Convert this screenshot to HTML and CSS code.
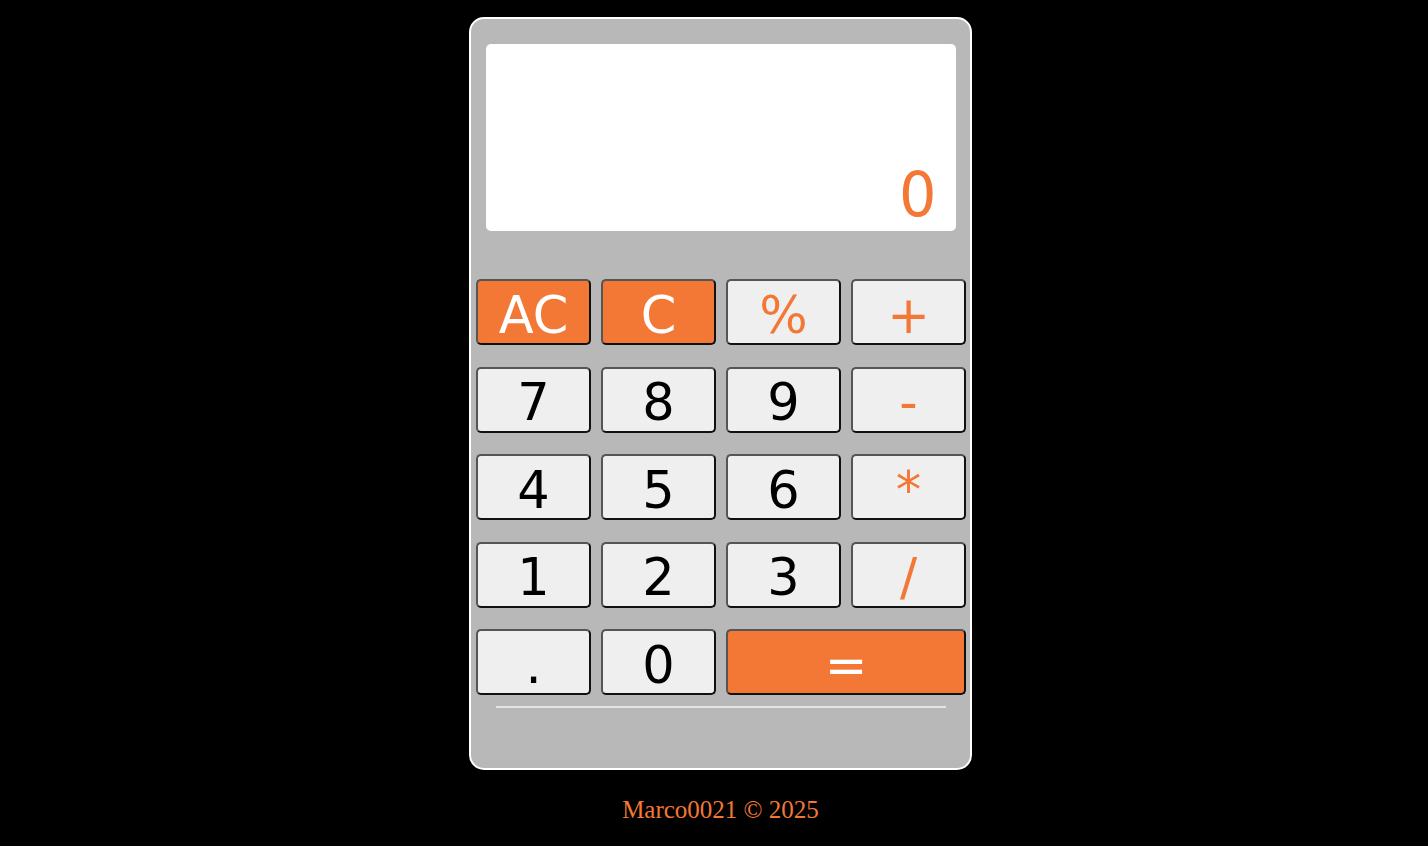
FILE: index.html
```html
<!DOCTYPE html>
<html lang="en">
<head>
<meta charset="utf-8">
<title>Calculator</title>
<link rel="stylesheet" href="styles.css">
</head>
<body>
<main class="page">
  <div class="calc">
    <div class="display"><span class="value">0</span></div>
    <div class="keys">
      <button class="key key-accent">AC</button>
      <button class="key key-accent">C</button>
      <button class="key key-op">%</button>
      <button class="key key-op">+</button>
      <button class="key">7</button>
      <button class="key">8</button>
      <button class="key">9</button>
      <button class="key key-op">-</button>
      <button class="key">4</button>
      <button class="key">5</button>
      <button class="key">6</button>
      <button class="key key-op">*</button>
      <button class="key">1</button>
      <button class="key">2</button>
      <button class="key">3</button>
      <button class="key key-op">/</button>
      <button class="key">.</button>
      <button class="key">0</button>
      <button class="key key-accent key-wide">=</button>
    </div>
    <div class="rule"></div>
  </div>
  <footer class="footer">Marco0021 © 2025</footer>
</main>
</body>
</html>
```
FILE: styles.css
```css
html, body {
  margin: 0;
  padding: 0;
  background: #000;
}

.page {
  display: flex;
  flex-direction: column;
  align-items: center;
  padding-left: 13px;
  padding-top: 17px;
}

.calc {
  box-sizing: border-box;
  width: 503px;
  height: 753px;
  background: #b8b8b8;
  border: 2px solid #fff;
  border-radius: 15px;
  padding: 25px 4px 0 5px;
  display: flex;
  flex-direction: column;
}

.display {
  box-sizing: border-box;
  margin: 0 10px;
  height: 187px;
  background: #fff;
  border-radius: 5px;
  display: flex;
  align-items: flex-end;
  justify-content: flex-end;
  padding: 0 20px 0 0;
}

.value {
  font-family: "DejaVu Sans", Verdana, sans-serif;
  font-size: 62px;
  line-height: 1;
  color: #f37735;
  margin-bottom: 5px;
  transform: scaleX(0.95);
  transform-origin: right bottom;
}

.keys {
  margin-top: 48px;
  display: grid;
  grid-template-columns: repeat(4, 115px);
  grid-auto-rows: 66px;
  column-gap: 10px;
  row-gap: 21.5px;
}

.key {
  box-sizing: border-box;
  margin: 0;
  padding: 6px 0 0 0;
  background: #efefef;
  border: 2px solid;
  border-color: #555 #111 #111 #555;
  border-radius: 5px;
  font-family: "DejaVu Sans", Verdana, sans-serif;
  font-size: 51px;
  line-height: 1;
  color: #000;
}

.key-op {
  color: #f37735;
}

.key-accent {
  background: #f37735;
  color: #fff;
}

.key-wide {
  grid-column: span 2;
}

.rule {
  margin: 11px 20px 0 20px;
  height: 2px;
  background: #e4e4e4;
}

.footer {
  margin-top: 26px;
  font-family: "Liberation Serif", "Times New Roman", serif;
  font-size: 25px;
  color: #f37735;
}
```
